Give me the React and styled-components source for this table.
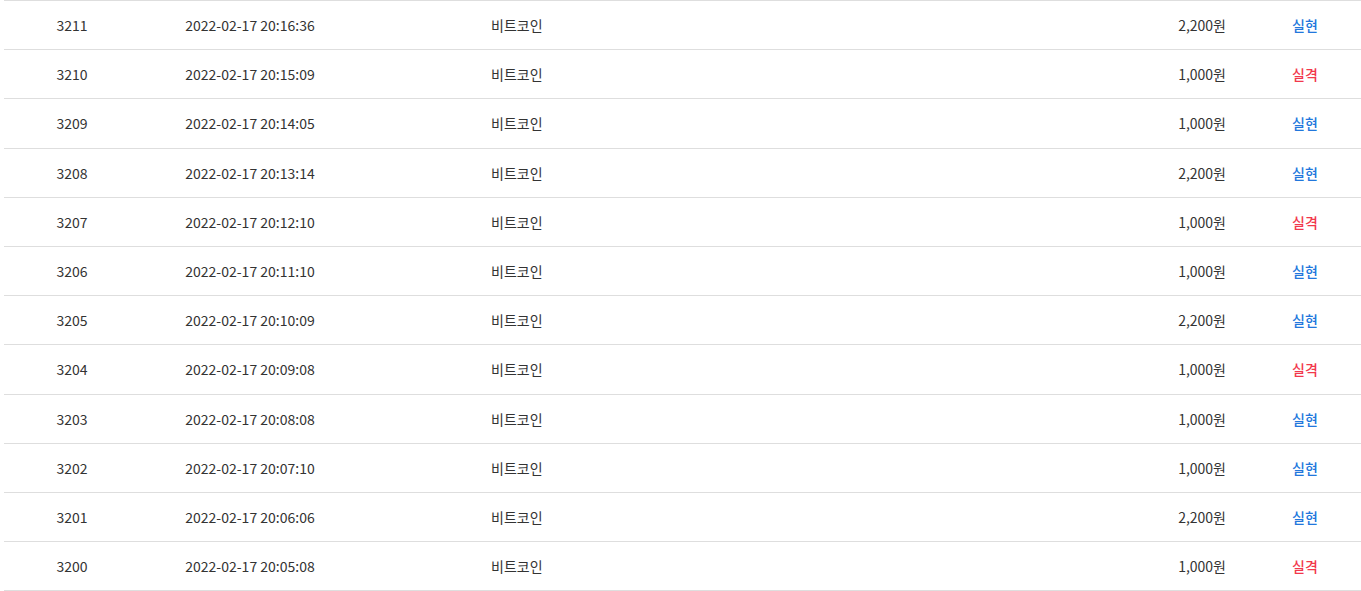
import React from 'react';
import styled, { createGlobalStyle } from 'styled-components';

const rows = [
  { no: 3211, date: '2022-02-17 20:16:36', price: '2,200원', win: true },
  { no: 3210, date: '2022-02-17 20:15:09', price: '1,000원', win: false },
  { no: 3209, date: '2022-02-17 20:14:05', price: '1,000원', win: true },
  { no: 3208, date: '2022-02-17 20:13:14', price: '2,200원', win: true },
  { no: 3207, date: '2022-02-17 20:12:10', price: '1,000원', win: false },
  { no: 3206, date: '2022-02-17 20:11:10', price: '1,000원', win: true },
  { no: 3205, date: '2022-02-17 20:10:09', price: '2,200원', win: true },
  { no: 3204, date: '2022-02-17 20:09:08', price: '1,000원', win: false },
  { no: 3203, date: '2022-02-17 20:08:08', price: '1,000원', win: true },
  { no: 3202, date: '2022-02-17 20:07:10', price: '1,000원', win: true },
  { no: 3201, date: '2022-02-17 20:06:06', price: '2,200원', win: true },
  { no: 3200, date: '2022-02-17 20:05:08', price: '1,000원', win: false },
];

export default function App() {
  return (
    <>
      <GlobalStyle />
      <Page>
        <List>
          {rows.map(row => (
            <Row key={row.no}>
              <Cell>{row.no}</Cell>
              <Cell>{row.date}</Cell>
              <TitleCell>비트코인</TitleCell>
              <PriceCell>{row.price}</PriceCell>
              <ResultCell win={row.win}>{row.win ? '실현' : '실격'}</ResultCell>
            </Row>
          ))}
        </List>
      </Page>
    </>
  );
}

const GlobalStyle = createGlobalStyle`
  body {
    margin: 0;
    background: #fff;
    font-family: "Noto Sans CJK KR", "Noto Sans", sans-serif;
  }
`;

const Page = styled.div`
  padding-left: 4px;
`;

const List = styled.div`
  border-top: 1px solid #dedede;
`;

const Row = styled.div`
  display: grid;
  grid-template-columns: 136px 220px 1fr 130px 104px;
  height: 49.2px;
  padding-right: 4px;
  box-sizing: border-box;
  border-bottom: 1px solid #dedede;
  font-size: 14px;
  color: #333;
`;

const Cell = styled.div`
  display: flex;
  align-items: center;
  justify-content: center;
`;

const TitleCell = styled(Cell)`
  justify-content: flex-start;
  padding-left: 131px;
`;

const PriceCell = styled(Cell)`
  justify-content: flex-end;
  padding-right: 27px;
`;

const ResultCell = styled(Cell)`
  font-weight: 500;
  color: ${props => (props.win ? '#2277dc' : '#f2384c')};
`;
